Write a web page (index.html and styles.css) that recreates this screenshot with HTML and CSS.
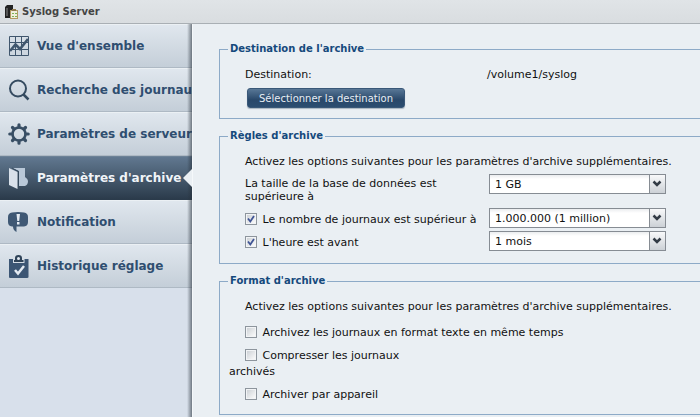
FILE: index.html
```
<!DOCTYPE html>
<html lang="fr">
<head>
  <meta charset="UTF-8" />
  <meta name="viewport" content="width=device-width, initial-scale=1.0"/>
  <title>Syslog Server</title>
  <link rel="stylesheet" href="styles.css">
</head>
<body>
  <header class="titlebar">
    <svg width="14" height="16" viewBox="0 0 14 16">
      <path d="M0 3 L2 1 H8 V13 L6 14 H0 Z" fill="#222"/>
      <path d="M1 4 H3 V12 H1 Z" fill="#555"/>
      <rect x="5.500" y="6.500" width="7" height="8" fill="#f1eedc" stroke="#b39a62"/>
      <rect x="7" y="5" width="4" height="2" fill="#8f7a4c"/>
      <path d="M7 9.500 H9 M10 9.500 H12 M7 12.500 H9 M10 12.500 H12" stroke="#7fb356"/>
    </svg>
    <h1>Syslog Server</h1>
  </header>

  <div class="window">
    <nav class="menu">
      <a href="#" class="item">
        <svg width="22" height="22" viewBox="0 0 22 22" fill="none" stroke="#40566d">
          <path d="M1.500 1.500 H20.500 V20.500 H1.500 Z M7.500 1 V21 M13.500 1 V21 M1 7.500 H21 M1 14.500 H21"/>
          <path d="M2 16 L7.500 9.500 L12 14 L20 4" stroke-width="2.600"/>
        </svg>
        <span>Vue d'ensemble</span>
      </a>
      <a href="#" class="item">
        <svg width="22" height="22" viewBox="0 0 22 22" fill="none" stroke="#354b60">
          <circle cx="10" cy="9.500" r="8" stroke-width="2"/>
          <path d="M15.500 15.500 L20.500 20.500" stroke-width="2.500"/>
        </svg>
        <span>Recherche des journaux</span>
      </a>
      <a href="#" class="item">
        <svg width="22" height="22" viewBox="0 0 22 22" fill="none" stroke="#384e64">
          <circle cx="11" cy="11" r="6.500" stroke-width="2.600"/>
          <path d="M11 1.800 V4 M11 18 V20.200 M1.800 11 H4 M18 11 H20.200 M4.500 4.500 L6 6 M16 16 L17.500 17.500 M17.500 4.500 L16 6 M4.500 17.500 L6 16" stroke-width="3.200" stroke-linecap="round"/>
        </svg>
        <span>Paramètres de serveur</span>
      </a>
      <a href="#" class="item active">
        <svg width="22" height="22" viewBox="0 0 22 22">
          <path d="M4 1 H17 V10 Q20 12 20 14 Q20 18 17 19 H11 V4 Z" fill="#b9c8d8"/>
          <path d="M1 1 L9.500 5 V22 L1 18 Z" fill="#d9e1ea"/>
          <path d="M4 1 L10.500 4.500 V21" fill="none" stroke="#34485b"/>
        </svg>
        <span>Paramètres d'archive</span>
      </a>
      <a href="#" class="item">
        <svg width="22" height="22" viewBox="0 0 22 22">
          <path d="M4 1.500 Q10 0.500 16 1.500 Q20 2 20 6 V11 Q20 15 16 15.500 H8.500 V21 Q5 19 5 15.500 H4 Q0 15 0 11 V6 Q0 2 4 1.500 Z" fill="#3f5874"/>
          <path d="M8.500 3 H12 L11.200 10 H9.300 Z M9 11 H11.500 V13.500 H9 Z" fill="#e3eaf2"/>
        </svg>
        <span>Notification</span>
      </a>
      <a href="#" class="item">
        <svg width="22" height="24" viewBox="0 0 22 24">
          <path d="M1 5 H5 V9 H16.500 V5 H20.500 V23 Q20.500 24 19 24 H2 Q1 24 1 23 Z" fill="#3c5674"/>
          <path d="M6 8 V6 H7 V4 Q7 1 10.500 1 Q14 1 14 4 V6 H15.500 V8 Z" fill="#2f4358"/>
          <circle cx="10.500" cy="4.500" r="1.500" fill="#e3eaf2"/>
          <path d="M7 16 L10 19.500 L16 12" fill="none" stroke="#e3eaf2" stroke-width="2.500"/>
        </svg>
        <span>Historique réglage</span>
      </a>
    </nav>

    <main class="content">
      <fieldset class="destination">
        <legend>Destination de l'archive</legend>
        <div class="row">
          <span class="label">Destination:</span>
          <span>/volume1/syslog</span>
        </div>
        <button type="button" class="btn">Sélectionner la destination</button>
      </fieldset>

      <fieldset class="rules">
        <legend>Règles d'archive</legend>
        <p>Activez les options suivantes pour les paramètres d'archive supplémentaires.</p>
        <div class="row size">
          <label class="label" for="size">La taille de la base de données est supérieure à</label>
          <select id="size"><option>1 GB</option></select>
        </div>
        <div class="row">
          <label class="label check"><input type="checkbox" checked> Le nombre de journaux est supérieur à</label>
          <select aria-label="Nombre de journaux"><option>1.000.000 (1 million)</option></select>
        </div>
        <div class="row">
          <label class="label check"><input type="checkbox" checked> L'heure est avant</label>
          <select aria-label="Durée"><option>1 mois</option></select>
        </div>
      </fieldset>

      <fieldset class="format">
        <legend>Format d'archive</legend>
        <p>Activez les options suivantes pour les paramètres d'archive supplémentaires.</p>
        <label class="check"><input type="checkbox"> Archivez les journaux en format texte en même temps</label>
        <label class="check wrap"><input type="checkbox"> Compresser les journaux<br>archivés</label>
        <label class="check"><input type="checkbox"> Archiver par appareil</label>
      </fieldset>
    </main>
  </div>
</body>
</html>
```
FILE: styles.css
```
* { box-sizing: border-box; }
body {
  margin: 0;
  min-height: 100vh;
  display: flex;
  flex-direction: column;
  font-family: "DejaVu Sans", Verdana, sans-serif;
  font-size: 11px;
  line-height: 14px;
  color: #111;
  background: #eaeff3;
}
.titlebar {
  display: flex;
  align-items: center;
  gap: 3px;
  height: 24px;
  padding-left: 5px;
  background: linear-gradient(#e0e4e7, #d9dde0);
  border-bottom: 1px solid #a9afb4;
}
.titlebar h1 {
  margin: 0;
  font-size: 10px;
  color: #444;
}
.window {
  flex: 1;
  display: flex;
}
.menu {
  position: relative;
  flex: none;
  width: 193px;
  background: #d8e0eb;
  border-right: 1px solid #f5f8fa;
}
/* ombre du panneau sur le menu */
.menu::after {
  content: "";
  position: absolute;
  top: 0;
  right: 0;
  bottom: 0;
  width: 5px;
  background: linear-gradient(to right, transparent, rgba(40, 50, 60, 0.6));
}
.item {
  position: relative;
  display: flex;
  align-items: center;
  gap: 7px;
  height: 44px;
  padding-left: 8px;
  overflow: hidden;
  white-space: nowrap;
  font-size: 12px;
  font-weight: bold;
  color: #2f4e70;
  text-decoration: none;
  background: linear-gradient(#e0e7ee, #c4ced8);
  border-top: 1px solid #ebf0f4;
  border-bottom: 1px solid #aeb9c4;
}
.item svg, .titlebar svg { flex: none; }
.item.active {
  color: #f0f4f8;
  background: linear-gradient(#617890, #2b3b4b);
  border-top-color: #6d8297;
  border-bottom-color: #2b3b4b;
}
.item.active::after {
  content: "";
  position: absolute;
  z-index: 1;
  top: 12px;
  right: 0;
  border: 9px solid transparent;
  border-left-width: 0;
  border-right-color: #eaeff3;
}
.content {
  flex: 1;
  min-width: 0;
  padding: 18px 0 0 26px;
}
fieldset {
  min-width: 0;
  margin: 0 0 10px;
  padding: 0 0 0 25px;
  border: 1px solid #8daac7;
  border-right: none;
}
legend {
  margin-left: -17px;
  padding: 0 2px;
  font-size: 10px;
  font-weight: bold;
  color: #15497c;
}
p {
  margin: 12px 0 5px;
  white-space: nowrap;
}
.row {
  display: flex;
  align-items: flex-end;
  margin-bottom: 3px;
}
.label {
  flex: none;
  width: 244px;
}
.destination { padding-bottom: 10px; }
.destination .row {
  margin: 11px 0 5px;
  line-height: 16px;
}
.destination .label { width: 242px; }
.btn {
  display: block;
  height: 20px;
  margin-left: 2px;
  padding: 0 11px;
  font-family: inherit;
  font-size: 10px;
  color: #e8eef4;
  background: linear-gradient(#587796, #29486a 60%, #2c4d70);
  border: 1px solid #3a5878;
  border-radius: 3px;
  box-shadow: 0 1px 1px #a9b5c0;
}
.rules { padding-bottom: 9px; }
.row.size {
  align-items: flex-start;
  margin-bottom: 5px;
}
.size .label {
  padding: 3px 36px 0 0;
  line-height: 13px;
}
select {
  width: 177px;
  height: 20px;
  padding: 0 20px 0 5px;
  appearance: none;
  font-family: inherit;
  font-size: 11px;
  color: #111;
  border: 1px solid #868c93;
  border-radius: 0;
  background:
    url("data:image/svg+xml,%3Csvg xmlns='http://www.w3.org/2000/svg' width='16' height='18'%3E%3Cpath d='M4.500 6.500 L8 10 L11.500 6.500' fill='none' stroke='%23333c46' stroke-width='2.500'/%3E%3Cpath d='M.5 0 V18' stroke='%23868c93'/%3E%3C/svg%3E") no-repeat right center,
    linear-gradient(#f8f9fa, #ccd1d6) no-repeat right / 16px 100%,
    linear-gradient(#ebedef, #fff 4px);
}
.check {
  display: block;
  margin-bottom: 7px;
  line-height: 16px;
}
.row .check { margin: 0; }
.format p { margin-bottom: 11px; }
.format { margin-bottom: 0; padding-bottom: 4px; }
.wrap {
  margin-left: -16px;
  text-indent: 16px;
}
input[type="checkbox"] {
  appearance: none;
  width: 12px;
  height: 12px;
  margin: 0 2px 0 0;
  vertical-align: -2px;
  border: 1px solid #8d959d;
  background: linear-gradient(135deg, #c8cdd2, #fff);
  box-shadow: inset 0 0 0 1px #f2f4f6;
}
input[type="checkbox"]:checked {
  background:
    url("data:image/svg+xml,%3Csvg xmlns='http://www.w3.org/2000/svg' width='10' height='10'%3E%3Cpath d='M2 4.500 L4.300 7.500 L8 2' fill='none' stroke='%23405595' stroke-width='1.800'/%3E%3C/svg%3E") no-repeat center,
    linear-gradient(135deg, #c8cdd2, #fff);
}
```
